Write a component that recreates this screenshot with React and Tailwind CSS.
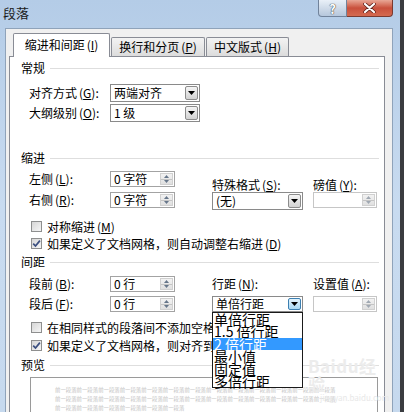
import React from "react";

function Acc({ k }) {
  return (
    <span className="ml-[2px]">
      (<span className="underline">{k}</span>)
    </span>
  );
}

function Heading({ children, className }) {
  return (
    <div className={"flex items-center h-[14px] pl-[11px] pr-[5px] " + className}>
      <span className="text-[12px] leading-[14px] text-black whitespace-nowrap">{children}</span>
      <div className="flex-1 h-px bg-[#dedede] ml-[5px]" />
    </div>
  );
}

function Arrow() {
  return (
    <svg width="7" height="4" viewBox="0 0 7 4">
      <path d="M0 0h7L3.5 4z" fill="#000" />
    </svg>
  );
}

function Select({ className, text, active }) {
  return (
    <div className={"flex items-center border border-[#8a8a8a] bg-white " + className}>
      <span className="flex-1 pl-[3px] text-[12px] leading-none whitespace-nowrap">{text}</span>
      <div
        className={
          "w-[13px] self-stretch my-px mr-px border rounded-[2px] flex items-center justify-center " +
          (active
            ? "border-[#3c7fb1] bg-gradient-to-b from-[#e3f3fc] to-[#a9d9f4]"
            : "border-[#8c8c8c] bg-gradient-to-b from-[#f5f5f5] to-[#d2d2d2]")
        }
      >
        <Arrow />
      </div>
    </div>
  );
}

function Spin({ className, text, disabled }) {
  return (
    <div
      className={
        "flex items-stretch border bg-white " +
        (disabled ? "border-[#c6c6c6] " : "border-[#a3a3a3] ") +
        className
      }
    >
      <span className="flex-1 pl-[3px] flex items-center text-[12px] leading-none whitespace-nowrap">{text}</span>
      <div className="w-[13px] my-px mr-px flex flex-col border border-[#d0d0d0] bg-gradient-to-b from-[#f2f2f2] to-[#e0e0e0]">
        <div className="flex-1 flex items-center justify-center border-b border-[#c4c4c4]">
          <svg width="5" height="3" viewBox="0 0 5 3">
            <path d="M0 3h5L2.5 0z" fill={disabled ? "#a0a8b2" : "#66768a"} />
          </svg>
        </div>
        <div className="flex-1 flex items-center justify-center">
          <svg width="5" height="3" viewBox="0 0 5 3">
            <path d="M0 0h5L2.5 3z" fill={disabled ? "#a0a8b2" : "#66768a"} />
          </svg>
        </div>
      </div>
    </div>
  );
}

function Check({ checked, children, className }) {
  return (
    <div className={"flex items-center h-[13px] pl-[21px] " + className}>
      <div className="w-[11px] h-[11px] shrink-0 border border-[#8e8f8f] bg-gradient-to-br from-[#d6d6d6] to-[#f6f6f6] flex items-center justify-center">
        {checked && (
          <svg width="9" height="9" viewBox="0 0 9 9">
            <path d="M1.2 4.6l2.3 2.4L7.9 1.6" stroke="#3b4f80" strokeWidth="1.7" fill="none" />
          </svg>
        )}
      </div>
      <span className="ml-[5px] text-[12px] leading-[13px] whitespace-nowrap">{children}</span>
    </div>
  );
}

function Label({ children, className }) {
  return <span className={"text-[12px] leading-none whitespace-nowrap " + className}>{children}</span>;
}

const rep = (n) => Array(n).fill("前一段落").join("");

export default function App() {
  return (
    <div className="w-[404px] h-[412px] overflow-hidden flex text-black font-['Noto_Sans_CJK_SC','Liberation_Sans',sans-serif]">
      <div className="w-[400px] flex flex-col bg-gradient-to-b from-[#b4cce7] via-[#c8dbf0] to-[#c6d9ee]">
        {/* title bar */}
        <div className="h-[28px] shrink-0 flex items-start">
          <span className="ml-[3px] mt-[5px] text-[13px] leading-[15px] text-[#1a1a1a]">段落</span>
          <div className="flex-1" />
          <div className="w-[29px] h-[17px] rounded-bl-[4px] border border-t-0 border-[#71839b] bg-gradient-to-b from-[#e9f0f8] via-[#cfdbe9] to-[#b6c7dc] flex items-center justify-center">
            <span className="text-[13px] leading-none font-bold text-white [text-shadow:0_0_1px_#333,0_0_1px_#333]">?</span>
          </div>
          <div className="w-[46px] h-[17px] rounded-br-[4px] border border-t-0 border-l-0 border-[#7a3a30] bg-gradient-to-b from-[#e8a796] via-[#c9503c] to-[#d46a50] flex items-center justify-center">
            <svg width="13" height="10" viewBox="0 0 13 10">
              <path d="M2 1l9 8M11 1L2 9" stroke="#5a1f18" strokeWidth="3.6" strokeLinecap="round" />
              <path d="M2 1l9 8M11 1L2 9" stroke="#fff" strokeWidth="2.2" strokeLinecap="round" />
            </svg>
          </div>
          <div className="w-[7px]" />
        </div>

        {/* body */}
        <div className="flex-1 flex pl-[5px] pr-[7px] min-h-0">
          <div className="flex-1 flex flex-col border-l border-r border-t border-[#8fa3ba] bg-[#f0f0f0] pl-[3px] pr-[7px] pt-[4px] min-h-0">
            {/* tabs */}
            <div className="h-[24px] shrink-0 flex items-end ml-[4px] -mb-px relative z-10">
              <div className="w-[97px] h-[24px] bg-white border border-b-0 border-[#898c95] rounded-t-[2px] flex items-center justify-center">
                <span className="text-[12px] leading-none mt-[-2px]">
                  缩进和间距<Acc k="I" />
                </span>
              </div>
              <div className="w-[94px] h-[19px] mb-px ml-px border border-b-0 border-[#898c95] rounded-t-[2px] bg-gradient-to-b from-[#f3f3f3] to-[#dcdcdc] flex items-center justify-center">
                <span className="text-[12px] leading-none">
                  换行和分页<Acc k="P" />
                </span>
              </div>
              <div className="w-[83px] h-[19px] mb-px ml-px border border-b-0 border-[#898c95] rounded-t-[2px] bg-gradient-to-b from-[#f3f3f3] to-[#dcdcdc] flex items-center justify-center">
                <span className="text-[12px] leading-none">
                  中文版式<Acc k="H" />
                </span>
              </div>
            </div>

            {/* panel */}
            <div className="flex-1 relative bg-white border border-b-0 border-[#898c95] flex flex-col">
              <Heading className="mt-[4px]">常规</Heading>
              <div className="mt-[9px] flex items-center pl-[19px]">
                <Label className="w-[81px]">
                  对齐方式<Acc k="G" />:
                </Label>
                <Select className="w-[90px] h-[18px]" text="两端对齐" />
              </div>
              <div className="mt-[2px] flex items-center pl-[19px]">
                <Label className="w-[81px]">
                  大纲级别<Acc k="O" />:
                </Label>
                <Select className="w-[90px] h-[18px]" text="1 级" />
              </div>

              <Heading className="mt-[29px]">缩进</Heading>
              <div className="flex pl-[19px]">
                <div className="w-[183px] flex flex-col">
                  <div className="mt-[6px] flex items-center">
                    <Label className="w-[81px]">
                      左侧<Acc k="L" />:
                    </Label>
                    <Spin className="w-[65px] h-[16px]" text="0 字符" />
                  </div>
                  <div className="mt-[5px] flex items-center">
                    <Label className="w-[81px]">
                      右侧<Acc k="R" />:
                    </Label>
                    <Spin className="w-[65px] h-[16px]" text="0 字符" />
                  </div>
                </div>
                <div className="w-[101px] flex flex-col">
                  <div className="mt-[13px] h-[14px] flex items-center">
                    <Label>
                      特殊格式<Acc k="S" />:
                    </Label>
                  </div>
                  <Select className="w-[91px] h-[18px]" text="(无)" />
                </div>
                <div className="w-[64px] flex flex-col">
                  <div className="mt-[13px] h-[14px] flex items-center">
                    <Label>
                      磅值<Acc k="Y" />:
                    </Label>
                  </div>
                  <Spin className="w-[64px] h-[16px]" text="" disabled />
                </div>
              </div>
              <Check className="mt-[10px]">
                对称缩进<Acc k="M" />
              </Check>
              <Check className="mt-[4px]" checked>
                如果定义了文档网格，则自动调整右缩进<Acc k="D" />
              </Check>

              <Heading className="mt-[5px]">间距</Heading>
              <div className="flex pl-[19px]">
                <div className="w-[183px] flex flex-col">
                  <div className="mt-[7px] flex items-center">
                    <Label className="w-[81px]">
                      段前<Acc k="B" />:
                    </Label>
                    <Spin className="w-[65px] h-[16px]" text="0 行" />
                  </div>
                  <div className="mt-[4px] flex items-center">
                    <Label className="w-[81px]">
                      段后<Acc k="F" />:
                    </Label>
                    <Spin className="w-[65px] h-[16px]" text="0 行" />
                  </div>
                </div>
                <div className="w-[101px] flex flex-col">
                  <div className="mt-[7px] h-[16px] flex items-center">
                    <Label>
                      行距<Acc k="N" />:
                    </Label>
                  </div>
                  <div className="mt-[4px] relative">
                    <Select className="w-[91px] h-[16px]" text="单倍行距" active />
                    <div className="absolute top-full left-0 w-[91px] border border-[#1a1a1a] bg-white z-20 flex flex-col text-[14px] leading-[12.4px]">
                      <div className="h-[12.4px] pl-[1px] whitespace-nowrap">单倍行距</div>
                      <div className="h-[12.4px] pl-[1px] whitespace-nowrap">1.5 倍行距</div>
                      <div className="h-[12.4px] pl-[1px] whitespace-nowrap bg-[#3399ff] text-white">2 倍行距</div>
                      <div className="h-[12.4px] pl-[1px] whitespace-nowrap">最小值</div>
                      <div className="h-[12.4px] pl-[1px] whitespace-nowrap">固定值</div>
                      <div className="h-[12.4px] pl-[1px] whitespace-nowrap">多倍行距</div>
                    </div>
                  </div>
                </div>
                <div className="w-[64px] flex flex-col">
                  <div className="mt-[7px] h-[16px] flex items-center">
                    <Label>
                      设置值<Acc k="A" />:
                    </Label>
                  </div>
                  <Spin className="mt-[4px] w-[64px] h-[16px]" text="" disabled />
                </div>
              </div>
              <Check className="mt-[9px]">
                在相同样式的段落间不添加空格<Acc k="C" />
              </Check>
              <Check className="mt-[5px]" checked>
                如果定义了文档网格，则对齐到网格<Acc k="W" />
              </Check>

              <Heading className="mt-[6px]">预览</Heading>
              <div className="mt-[5px] ml-[20px] w-[348px] h-[80px] border border-[#9a9a9a] pl-[24px] pt-[8px] flex flex-col text-[5.4px] leading-[9px] text-[#c4c4c4] whitespace-nowrap">
                <span>{rep(13)}</span>
                <span>{rep(13)}</span>
                <span>{rep(6)}</span>
              </div>

              {/* watermark */}
              <div className="absolute left-[298px] top-[300px] flex flex-col items-start pointer-events-none">
                <span className="text-[17px] leading-[18px] font-bold text-[#ececec] tracking-[0.5px]">Baidu经验</span>
                <span className="text-[8px] leading-[10px] text-[#e8e8e8] ml-[12px]">jingyan.baidu.com</span>
              </div>
            </div>
          </div>
        </div>
      </div>
      <div className="w-[4px] bg-[#3a3c40]" />
    </div>
  );
}
